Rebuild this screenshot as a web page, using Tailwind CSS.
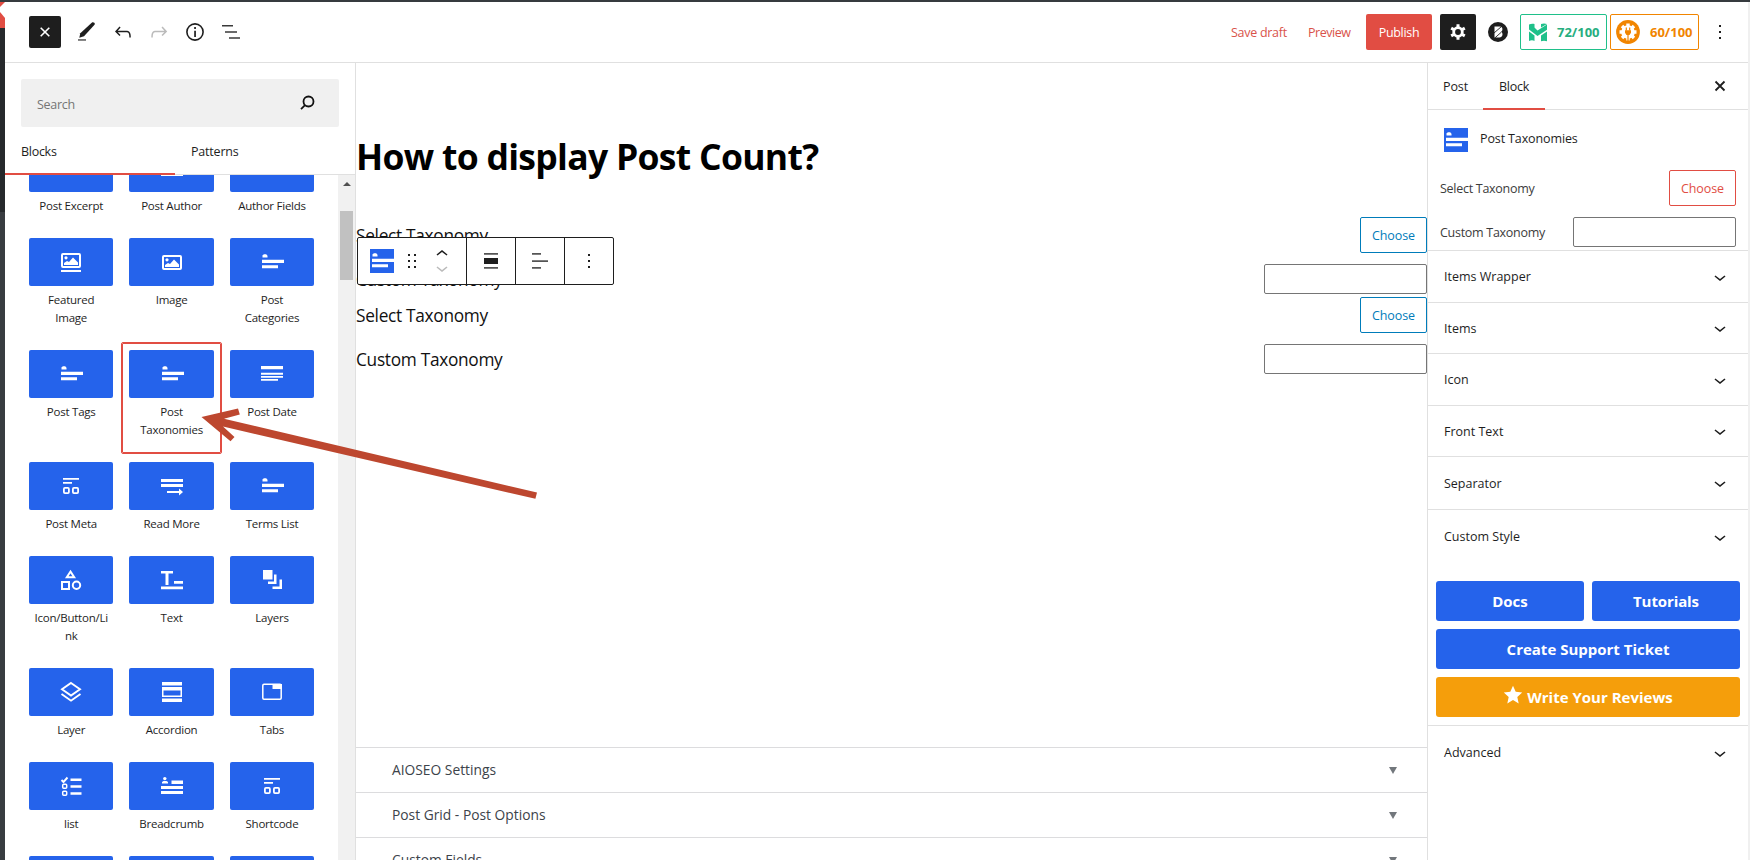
<!DOCTYPE html>
<html lang="en">
<head>
<meta charset="utf-8">
<title>Edit Post</title>
<script src="https://cdn.jsdelivr.net/npm/@tailwindcss/browser@4"></script>
</head>
<body class="relative flex h-[860px] w-[1750px] overflow-hidden bg-white font-['Open_Sans','Noto_Sans',sans-serif] text-[12.5px] tracking-[-0.28px] text-[#1e1e1e]">

<svg class="hidden">
  <symbol id="terms" viewBox="0 0 24 24"><path d="M2.500 7.500V5.200L4 4.200h2.200l1.300 1.600v1.700z M2 9.700h22v3.300H2z M2 15.200h16v3H2z" fill="currentColor"/></symbol>
  <symbol id="featured" viewBox="0 0 24 24"><rect x="3" y="4" width="18" height="13" rx="1" fill="none" stroke="currentColor" stroke-width="2"/><circle cx="7" cy="7.800" r="1.600" fill="currentColor"/><path d="M5 15v-2l3-2 2 1 4-4.500 5 5V15z M2 20h20v2H2z" fill="currentColor"/></symbol>
  <symbol id="image" viewBox="0 0 24 24"><rect x="3" y="6" width="18" height="13" rx="1" fill="none" stroke="currentColor" stroke-width="2"/><circle cx="7" cy="9.800" r="1.600" fill="currentColor"/><path d="M5 17v-2l3-2 2 1 4-4.500 5 5V17z" fill="currentColor"/></symbol>
  <symbol id="date" viewBox="0 0 24 24"><path d="M1 4h22v3.200H1z M1 10.800h22v2H1z M1 14h22v1.800H1z M1 17h17v1.800H1z" fill="currentColor"/></symbol>
  <symbol id="meta" viewBox="0 0 24 24"><path d="M4 4h16v1.800H4z M4 8h9v1.800H4z" fill="currentColor"/><rect x="4.900" y="13.900" width="5" height="5.200" rx="1" fill="none" stroke="currentColor" stroke-width="1.800"/><rect x="13.900" y="13.900" width="5.200" height="5.200" rx="1" fill="none" stroke="currentColor" stroke-width="1.800"/></symbol>
  <symbol id="more" viewBox="0 0 24 24"><path d="M1 5h22v3H1z M1 10h22v3H1z M7 17h12v-2.500l4 3.500-4 3.500V19H7z" fill="currentColor"/></symbol>
  <symbol id="shapes" viewBox="0 0 24 24"><path d="M11.500 3.500L15.200 9.200H7.800z" fill="none" stroke="currentColor" stroke-width="2"/><rect x="3" y="14" width="7" height="7" fill="none" stroke="currentColor" stroke-width="2"/><circle cx="17.500" cy="17.300" r="3.700" fill="none" stroke="currentColor" stroke-width="2"/></symbol>
  <symbol id="text" viewBox="0 0 24 24"><path d="M1 3h12v2.500H8.500V17H5.500V5.500H1z M14 13h9v2.800h-9z M1 18.500h22v2.800H1z" fill="currentColor"/></symbol>
  <symbol id="copies" viewBox="0 0 24 24"><path d="M3 2h9.500v9.500H3z M14 6.500h2.500v9.500H8v-2.500h6z M19.500 11.500H22V21H12.500v-2.500h7z" fill="currentColor"/></symbol>
  <symbol id="layer" viewBox="0 0 24 24"><path d="M12 3l9 6.300-9 6.300-9-6.300z M2.500 14l9.500 6.700L21.500 14" fill="none" stroke="currentColor" stroke-width="1.900"/></symbol>
  <symbol id="accordion" viewBox="0 0 24 24"><path d="M2 2h20v3.500H2z M2 18.500h20V22H2z M2 7h20v10H2z M3.500 10.500v5h17v-5z" fill="currentColor" fill-rule="evenodd"/></symbol>
  <symbol id="tabs" viewBox="0 0 24 24"><rect x="2.800" y="4.300" width="18.400" height="15" rx="1.200" fill="none" stroke="currentColor" stroke-width="1.500"/><path d="M12.500 4H22v5h-9.500z" fill="currentColor"/></symbol>
  <symbol id="list" viewBox="0 0 24 24"><path d="M2.500 6l2 2 4-4.500" fill="none" stroke="currentColor" stroke-width="1.900"/><path d="M11.500 4.500h11V7h-11z M11.500 11.300h11v2.500h-11z M11.500 18.200h11v2.500h-11z" fill="currentColor"/><rect x="3.700" y="10.300" width="4" height="4" rx="1" fill="none" stroke="currentColor" stroke-width="1.500"/><rect x="3.700" y="17.300" width="4" height="4" rx="1" fill="none" stroke="currentColor" stroke-width="1.500"/></symbol>
  <symbol id="crumb" viewBox="0 0 24 24"><circle cx="4.800" cy="4.600" r="1.700" fill="currentColor"/><path d="M2 9.500V8l1.500-1h3L8 8v1.500z M11.500 6.500H23V10H11.500z M1 12h22v3H1z M1 17h22v3H1z" fill="currentColor"/></symbol>
  <symbol id="chev" viewBox="0 0 24 24"><path d="M17.500 11.600L12 16l-5.500-4.400.9-1.200L12 14l4.500-3.600 1 1.200z" fill="currentColor"/></symbol>
  <symbol id="dots" viewBox="0 0 24 24"><path d="M11 5h2v2h-2z M11 11h2v2h-2z M11 17h2v2h-2z" fill="currentColor"/></symbol>
</svg>

<!-- admin menu edge -->
<div class="flex w-[5px] shrink-0 flex-col bg-[#383c40]">
  <svg class="h-[28px] w-[5px]" viewBox="0 0 5 28"><path d="M0 0h5v28H0z" fill="#e14d43"/><path d="M0 0h5v2H0z" fill="#363b3f"/><path d="M5 2v16L0 12V7z" fill="#fff"/></svg>
  <div class="h-[184px] bg-[#26292c]"></div>
</div>

<div class="flex min-w-0 flex-1 flex-col">
  <header class="flex h-[63px] shrink-0 items-center border-t-2 border-b border-t-[#363b3f] border-b-[#e0e0e0] pl-6">
    <div class="flex items-center gap-3">
      <div class="flex size-8 items-center justify-center rounded-xs bg-[#1e1e1e] text-white">
        <svg class="size-6" viewBox="0 0 24 24"><path d="M7.700 7.700l8.600 8.600M16.300 7.700l-8.600 8.600" stroke="currentColor" stroke-width="1.600"/></svg>
      </div>
      <svg class="ml-0.5 size-6" viewBox="0 0 24 24"><path d="M17 2.500c.7-.6 1.600-.4 2.300.2.600.6.700 1.300.2 2L9 16.200l-4.700 1.600 1-4.600z" fill="#1e1e1e"/><path d="M3 19.200h8v1.500H3z" fill="#555"/></svg>
      <svg class="size-6" viewBox="0 0 24 24"><path d="M18.300 11.700c-.6-.6-1.400-.9-2.300-.9H6.700l2.900-3.300-1.100-1-4.500 5L8.500 16l1-1-2.700-2.700H16c.5 0 .9.200 1.300.5 1 1 1 3.400 1 4.500v.3h1.500v-.2c0-1.500 0-4.300-1.500-5.700z" fill="#1e1e1e"/></svg>
      <svg class="size-6" viewBox="0 0 24 24"><path d="M15.600 6.500l-1.100 1 2.900 3.300H8c-.9 0-1.700.3-2.300.9-1.400 1.500-1.400 4.200-1.400 5.600v.2h1.500v-.3c0-1.100 0-3.500 1-4.500.3-.3.700-.5 1.300-.5h9.200L14.500 15l1.100 1.100 4.600-4.600-4.600-5z" fill="#bbb"/></svg>
      <svg class="size-6" viewBox="0 0 24 24"><circle cx="12" cy="12" r="8.100" fill="none" stroke="#1e1e1e" stroke-width="1.600"/><path d="M11.200 7h1.700v1.900h-1.700z M11.200 10.700h1.700V17h-1.700z" fill="#1e1e1e"/></svg>
      <svg class="size-6" viewBox="0 0 24 24"><path d="M3 5h11v1.600H3z M6 11.200h12v1.600H6z M10 17.200h11v1.600H10z" fill="#3a3a3a"/></svg>
    </div>
    <div class="ml-auto flex items-center text-[#d9534a]">
      <span class="w-[77px] pt-[2px]">Save draft</span>
      <span class="w-[58px] pt-[2px] tracking-[-0.45px]">Preview</span>
      <span class="flex h-9 w-[66px] items-center justify-center rounded-xs bg-[#e14d43] pt-[2px] text-white tracking-[-0.3px]">Publish</span>
      <span class="ml-2 flex size-9 items-center justify-center rounded-xs bg-[#1e1e1e] text-white">
        <svg class="size-5" viewBox="0 0 20 20"><circle cx="10" cy="10" r="4.300" fill="none" stroke="currentColor" stroke-width="2.800"/><path d="M10 2.200v3M10 14.800v3M3.200 6.100l2.500 1.400M14.300 12.500l2.500 1.400M3.200 13.900l2.500-1.400M14.300 7.500l2.500-1.400" stroke="currentColor" stroke-width="3"/></svg>
      </span>
      <svg class="ml-3 size-5" viewBox="0 0 20 20"><circle cx="10" cy="10" r="10" fill="#1e1e1e"/><path d="M6.500 4.500h5.500c2.800 0 3.200 4 1.200 5.200 2.200 1.300 1.600 5.800-1.700 5.800h-5z" fill="#fff"/><path d="M6 11l7.500-6.500M7 15.800l6.500-5.800" stroke="#1e1e1e" stroke-width=".9"/></svg>
      <span class="ml-3 flex h-9 w-[87px] items-center rounded-xs border border-[#1fc08a] pl-2 text-[13px] font-bold tracking-[0px] text-[#27ae7f]">
        <svg class="h-[19px] w-[18px]" viewBox="0 0 18 19"><path d="M0 1.500C2 .5 4 .5 5.500 1v3.500l3 3L18 1.500v5.200L8.500 13 0 6.500z M12 1c2-.8 4-.8 6 0l-6 3.500z M0 8.500l5.500 4V18c-1.500-1-3.500-1-5.500 0z M18 8.500v9.800c-2-.9-4-.9-6 0v-5.800z" fill="#1fc08a"/></svg>
        <span class="ml-[10px] pt-[2px]">72/100</span>
      </span>
      <span class="ml-[3px] flex h-9 w-[89px] items-center rounded-xs border border-[#f18500] pl-[5px] text-[13px] font-bold tracking-[0px] text-[#f18500]">
        <svg class="size-[24px]" viewBox="0 0 24 24"><circle cx="12" cy="12" r="11.900" fill="#f18500"/><circle cx="12" cy="12" r="6.800" fill="#fff"/><path d="M12 3.500v17M3.500 12h17M6 6l12 12M18 6L6 18" stroke="#fff" stroke-width="3.400"/><path d="M10.300 7.500v3M13.700 7.500v3" stroke="#f18500" stroke-width="1.200"/><path d="M9 10.300h6v2.500l-1.500 2.200h-3L9 12.800z M11.400 15h1.200v7h-1.200z" fill="#f18500"/></svg>
        <span class="ml-[10px] pt-[2px]">60/100</span>
      </span>
      <svg class="mr-[18px] ml-[9px] size-6 text-[#1e1e1e]" viewBox="0 0 24 24"><use href="#dots"/></svg>
    </div>
  </header>

  <div class="flex min-h-0 flex-1">
    <!-- inserter -->
    <aside class="flex w-[351px] shrink-0 flex-col overflow-hidden border-r border-[#e0e0e0]">
      <div class="mt-4 ml-4 flex h-12 w-[318px] shrink-0 items-center justify-between rounded-xs bg-[#f0f0f0] pr-5 pl-4 text-[#757575]">
        <span class="pt-1">Search</span>
        <svg class="mb-[1px] size-6 text-[#111]" viewBox="0 0 24 24"><circle cx="13.500" cy="10.500" r="5" fill="none" stroke="currentColor" stroke-width="1.800"/><path d="M10 14.200L6 18.100" stroke="currentColor" stroke-width="1.800"/></svg>
      </div>
      <div class="flex h-12 shrink-0 border-b border-[#e0e0e0] font-medium">
        <div class="-mb-px flex w-[170px] items-center border-b-2 border-[#e14d43] pt-1 pl-4">Blocks</div>
        <div class="flex items-center pt-[3px] pl-4 tracking-[-0.2px]">Patterns</div>
      </div>
      <div class="flex min-h-0 flex-1 overflow-hidden">
        <div id="tiles" class="-mt-[39px] grid w-[333px] grid-cols-[repeat(3,100.4px)] content-start self-start pl-4"></div>
        <div class="flex w-[17px] flex-col items-center bg-[#f1f1f1] pt-[7px]">
          <div class="size-0 border-x-4 border-b-4 border-x-transparent border-b-[#505050]"></div>
          <div class="mt-[25px] h-[69px] w-[13px] bg-[#c1c1c1]"></div>
        </div>
      </div>
    </aside>

    <!-- canvas -->
    <main class="relative flex w-[1071px] shrink-0 flex-col overflow-hidden">
      <h1 class="mt-[68px] h-[50px] text-[35.5px] leading-[50px] font-bold tracking-[-0.7px] text-black">How to display Post Count?</h1>
      <div id="rows" class="mt-9 flex flex-col text-[17.3px] tracking-[-0.3px] text-[#111]"></div>
      <div class="absolute top-[174px] left-px flex h-12 rounded-xs border border-[#1e1e1e] bg-white">
        <div class="flex w-[109px] items-center border-r border-[#1e1e1e] pl-3">
          <svg class="size-6 bg-[#2563eb] text-white" viewBox="0 0 24 24"><use href="#terms"/></svg>
          <svg class="ml-[6px] size-6" viewBox="0 0 24 24"><path d="M8 5h2v2H8z M14 5h2v2h-2z M8 11h2v2H8z M14 11h2v2h-2z M8 17h2v2H8z M14 17h2v2h-2z" fill="#1e1e1e"/></svg>
          <div class="ml-[6px] flex flex-col">
            <svg class="h-4 w-6 rotate-180" viewBox="0 5 24 16"><use href="#chev" width="24" height="24"/></svg>
            <svg class="h-4 w-6 text-[#bbb]" viewBox="0 5 24 16"><use href="#chev" width="24" height="24"/></svg>
          </div>
        </div>
        <div class="flex w-[49px] items-center justify-center border-r border-[#1e1e1e]"><svg class="size-6" viewBox="0 0 24 24"><path d="M5 4h14v1.800H5z M5 18h14v1.800H5z" fill="#555"/><path d="M5 9h14v6H5z" fill="#1e1e1e"/></svg></div>
        <div class="flex w-[49px] items-center justify-center border-r border-[#1e1e1e]"><svg class="size-6" viewBox="0 0 24 24"><path d="M4 4h9v1.800H4z M4 11.200h16V13H4z M4 18h9v1.800H4z" fill="#555"/></svg></div>
        <div class="flex w-12 items-center justify-center"><svg class="size-6" viewBox="0 0 24 24"><use href="#dots"/></svg></div>
      </div>
      <div id="meta-boxes" class="absolute inset-x-0 top-[684px] flex flex-col text-[13.8px] font-medium tracking-[0px] text-[#3c434a]"></div>
    </main>

    <!-- settings -->
    <aside class="flex w-[321px] shrink-0 flex-col border-l border-[#e0e0e0]">
      <div class="flex h-[47px] shrink-0 items-center border-b border-[#e0e0e0] pl-[15px] font-medium">
        <span class="w-10 pt-[3px] tracking-[-0.1px]">Post</span>
        <span class="-mb-px flex h-[47px] w-[62px] items-center justify-center border-b-2 border-[#e14d43] pt-[3px]">Block</span>
        <svg class="mr-4 ml-auto size-6" viewBox="0 0 24 24"><path d="M7.500 7.500l9 9M16.500 7.500l-9 9" stroke="#1e1e1e" stroke-width="1.800"/></svg>
      </div>
      <div class="flex h-[141px] shrink-0 flex-col border-b border-[#e0e0e0] pl-3">
        <div class="mt-[18px] flex pl-1">
          <svg class="size-6 bg-[#2563eb] text-white" viewBox="0 0 24 24"><use href="#terms"/></svg>
          <span class="-mt-px ml-3 h-6 leading-6 font-medium tracking-[-0.12px]">Post Taxonomies</span>
        </div>
        <div class="mt-[18px] flex h-9 w-[296px] items-center justify-between text-[#3c3c3c]">
          <span class="pt-[2px]">Select Taxonomy</span>
          <span class="flex h-9 w-[67px] items-center justify-center rounded-xs border border-[#e14d43] pt-[2px] text-[#e14d43] tracking-[-0.1px]">Choose</span>
        </div>
        <div class="mt-[11px] flex h-[30px] w-[296px] items-center justify-between text-[#3c3c3c]">
          <span class="pt-[2px]">Custom Taxonomy</span>
          <span class="h-[30px] w-[163px] rounded-xs border border-[#757575]"></span>
        </div>
      </div>
      <div id="panels" class="flex flex-col font-medium tracking-[0px]"></div>
      <div class="mt-[16px] grid grid-cols-2 gap-2 border-b border-[#e0e0e0] px-2 pb-2 text-[15px] font-bold tracking-[0px] text-white">
        <div class="flex h-10 items-center justify-center rounded-[3px] bg-[#2563eb]">Docs</div>
        <div class="flex h-10 items-center justify-center rounded-[3px] bg-[#2563eb] tracking-[-0.1px]">Tutorials</div>
        <div class="col-span-2 flex h-10 items-center justify-center rounded-[3px] bg-[#2563eb]">Create Support Ticket</div>
        <div class="col-span-2 flex h-10 items-center justify-center gap-1 rounded-[3px] bg-[#f59e0b]">
          <svg class="mb-1 size-5" viewBox="0 0 20 20"><path d="M10 .8l2.700 6 6.500.7-4.900 4.400 1.400 6.500L10 15.100l-5.700 3.300 1.400-6.500L.8 7.500l6.500-.7z" fill="#fff"/></svg>
          <span>Write Your Reviews</span>
        </div>
      </div>
      <div class="flex h-[53px] items-center justify-between pr-4 pl-4 font-medium tracking-[0px]"><span class="pt-px">Advanced</span><svg class="size-6" viewBox="0 0 24 24"><use href="#chev"/></svg></div>
    </aside>
    <div class="-mt-[61px] w-[2px] bg-[#f0f0f0]"></div>
  </div>
</div>

<!-- pointer annotation -->
<svg class="absolute top-[400px] left-[190px] h-[110px] w-[360px]" viewBox="190 400 360 110"><path d="M201.500 417L238 408.500l1.800 6L224 418.800 537 492.500l-1.600 6.300L223 426.500l11.500 10.500-4 4.200z" fill="#bd472f"/></svg>

<script>
const tiles = [['terms','Post Excerpt'],['crumb','Post Author'],['terms','Author Fields'],['featured','Featured Image'],['image','Image'],['terms','Post Categories'],['terms','Post Tags'],['terms','Post Taxonomies',1],['date','Post Date'],['meta','Post Meta'],['more','Read More'],['terms','Terms List'],['shapes','Icon/Button/Link'],['text','Text'],['copies','Layers'],['layer','Layer'],['accordion','Accordion'],['tabs','Tabs'],['list','list'],['crumb','Breadcrumb'],['meta','Shortcode'],['terms',''],['terms',''],['terms','']];
document.getElementById('tiles').innerHTML = tiles.map(([icon, label, on]) => `
  <div class="px-[7px] pt-[7px] pb-[14px] border ${on ? 'rounded-xs outline-1 -outline-offset-2 outline-[#e14d43] border-[#e14d43]' : 'border-transparent'}">
    <div class="flex h-12 items-center justify-center rounded-xs bg-[#2563eb] text-white"><svg class="size-6" viewBox="0 0 24 24"><use href="#${icon}"/></svg></div>
    <div class="mt-[5px] min-h-[18px] px-1 text-center text-[11.5px] leading-[18px] tracking-[-0.24px] break-all">${label.replace(' Image','<br>Image').replace(' Categories','<br>Categories').replace(' Taxonomies','<br>Taxonomies')}</div>
  </div>`).join('');
document.getElementById('rows').innerHTML = [0, 1].map(() => `
  <div class="flex h-9 items-center justify-between"><span class="pt-[2px]">Select Taxonomy</span><span class="flex h-9 w-[67px] items-center justify-center rounded-xs border border-[#007cba] pt-[2px] text-[12.5px] tracking-[-0.1px] text-[#007cba]">Choose</span></div>
  <div class="mt-[11px] mb-[3px] flex h-[30px] items-center justify-between"><span class="pt-[2px]">Custom Taxonomy</span><span class="h-[30px] w-[163px] rounded-xs border border-[#757575]"></span></div>`).join('');
document.getElementById('meta-boxes').innerHTML = ['AIOSEO Settings', 'Post Grid - Post Options', 'Custom Fields'].map(t => `
  <div class="flex h-[45px] items-center justify-between border-t border-[#dcdcde] bg-white pr-[30px] pl-9"><span>${t}</span><span class="size-0 border-x-4 border-t-[7px] border-x-transparent border-t-[#72777c]"></span></div>`).join('');
document.getElementById('panels').innerHTML = [['Items Wrapper','h-[52px]'],['Items','h-[51px]'],['Icon','h-[52px]'],['Front Text','h-[51px]'],['Separator','h-[53px]']].map(([t, h]) => `
  <div class="flex ${h} items-center justify-between border-b border-[#e0e0e0] px-4"><span class="pt-[2px]">${t}</span><svg class="size-6" viewBox="0 0 24 24"><use href="#chev"/></svg></div>`).join('') +
  `<div class="flex h-[55px] items-center justify-between px-4 pb-[2px]"><span class="pt-[2px]">Custom Style</span><svg class="size-6" viewBox="0 0 24 24"><use href="#chev"/></svg></div>`;
</script>
</body>
</html>
